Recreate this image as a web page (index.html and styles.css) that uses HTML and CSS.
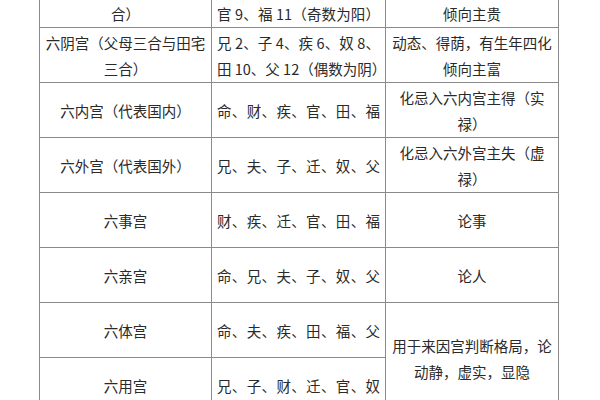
FILE: index.html
```html
<!DOCTYPE html>
<html lang="zh-CN">
<head>
<meta charset="utf-8">
<link rel="stylesheet" href="styles.css">
</head>
<body>
<table class="palace">
  <colgroup>
    <col class="c1"><col class="c2"><col class="c3">
  </colgroup>
  <tr>
    <td class="name">六阳宫（命宫与迁移宫三合）</td>
    <td class="list">命 1、夫 3、财 5、迁 7、<br>官 9、福 11（奇数为阳）</td>
    <td class="note">静态、失荫，有生年四化<br>倾向主贵</td>
  </tr>
  <tr>
    <td class="name">六阴宫（父母三合与田宅三合）</td>
    <td class="list">兄 2、子 4、疾 6、奴 8、<br>田 10、父 12（偶数为阴）</td>
    <td class="note">动态、得荫，有生年四化倾向主富</td>
  </tr>
  <tr>
    <td class="name">六内宫（代表国内）</td>
    <td class="list">命、财、疾、官、田、福</td>
    <td class="note">化忌入六内宫主得（实禄）</td>
  </tr>
  <tr>
    <td class="name">六外宫（代表国外）</td>
    <td class="list">兄、夫、子、迁、奴、父</td>
    <td class="note">化忌入六外宫主失（虚禄）</td>
  </tr>
  <tr>
    <td class="name">六事宫</td>
    <td class="list">财、疾、迁、官、田、福</td>
    <td class="note">论事</td>
  </tr>
  <tr>
    <td class="name">六亲宫</td>
    <td class="list">命、兄、夫、子、奴、父</td>
    <td class="note">论人</td>
  </tr>
  <tr>
    <td class="name">六体宫</td>
    <td class="list">命、夫、疾、田、福、父</td>
    <td class="note" rowspan="2">用于来因宫判断格局，论动静，虚实，显隐</td>
  </tr>
  <tr>
    <td class="name">六用宫</td>
    <td class="list">兄、子、财、迁、官、奴</td>
  </tr>
</table>
</body>
</html>
```

FILE: styles.css
```css
html, body {
  margin: 0;
  padding: 0;
  background: #ffffff;
}
body {
  font-family: "Noto Sans CJK SC", "Noto Sans", sans-serif;
  color: #2a2a2a;
  font-size: 14.5px;
  overflow: hidden;
}
.palace {
  border-collapse: collapse;
  margin: -28px 0 0 39px;
  table-layout: fixed;
  width: 519px;
}
.c1 { width: 172px; }
.c2 { width: 174px; }
.c3 { width: 173px; }
.palace td {
  border: 1px solid #8a8a8a;
  height: 55px;
  padding: 2px 5px 0 5px;
  line-height: 26px;
  vertical-align: middle;
  box-sizing: border-box;
}
.name, .note {
  text-align: center;
}
.list {
  padding-left: 6px;
  text-align: justify;
  text-align-last: justify;
}
```
